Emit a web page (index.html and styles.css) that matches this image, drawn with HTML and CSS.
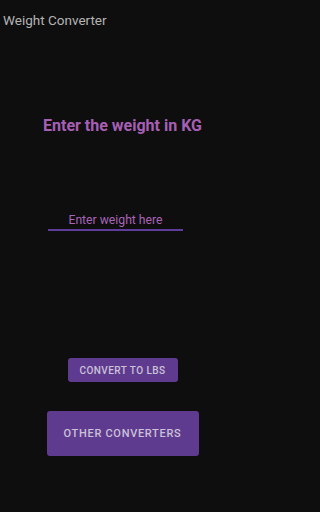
FILE: index.html
```html
<!DOCTYPE html>
<html>
<head>
<meta charset="utf-8">
<link rel="stylesheet" href="styles.css">
</head>
<body>
<div class="app">
  <div class="topbar">Weight Converter</div>
  <h1 class="heading">Enter the weight in KG</h1>
  <div class="field">
    <input class="input" type="text" placeholder="Enter weight here">
  </div>
  <button class="btn btn-small">CONVERT TO LBS</button>
  <button class="btn btn-large">OTHER CONVERTERS</button>
</div>
</body>
</html>
```
FILE: styles.css
```css
html, body {
  margin: 0;
  padding: 0;
  background: #0e0e0e;
  font-family: Roboto, "Liberation Sans", sans-serif;
}
.app {
  width: 245px;
  height: 512px;
  display: flex;
  flex-direction: column;
  align-items: center;
  background: #0e0e0e;
}
.topbar {
  align-self: stretch;
  padding: 10px 0 0 3px;
  height: 20px;
  font-size: 13.5px;
  line-height: 20px;
  color: #b4b4b4;
}
.heading {
  margin: 84px 0 0 0;
  font-size: 16px;
  line-height: 24px;
  font-weight: bold;
  color: #a65fb5;
}
.field {
  margin-top: 74px;
  margin-right: 14px;
  width: 135px;
  border-bottom: 2px solid #5e3c9a;
}
.input {
  display: block;
  width: 100%;
  box-sizing: border-box;
  background: transparent;
  border: none;
  outline: none;
  padding: 0;
  height: 17px;
  line-height: 17px;
  font-family: Roboto, "Liberation Sans", sans-serif;
  font-size: 12.2px;
  text-align: center;
  color: #a864b8;
}
.input::placeholder {
  color: #a864b8;
  opacity: 1;
}
.btn {
  border: none;
  border-radius: 3px;
  background: #5f3b8f;
  color: #cbc1d8;
  font-family: Roboto, "Liberation Sans", sans-serif;
  font-weight: 500;
  padding: 0;
}
.btn-small {
  margin-top: 127px;
  width: 110px;
  height: 24px;
  font-size: 10px;
  letter-spacing: 0.45px;
}
.btn-large {
  margin-top: 29px;
  width: 152px;
  height: 45px;
  font-size: 11px;
  letter-spacing: 0.7px;
}
```
